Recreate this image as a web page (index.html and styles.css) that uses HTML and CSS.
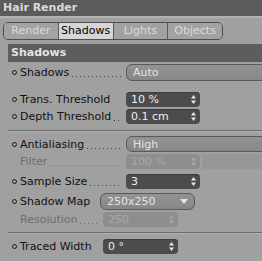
FILE: index.html
```html
<!DOCTYPE html>
<html>
<head>
<meta charset="utf-8">
<link rel="stylesheet" href="styles.css">
</head>
<body>
<div class="panel">
  <div class="title">Hair Render</div>
  <div class="tabs">
    <div class="tab">Render</div>
    <div class="tab sel">Shadows</div>
    <div class="tab">Lights</div>
    <div class="tab">Objects</div>
  </div>
  <div class="section">Shadows</div>

  <div class="row r-shadows">
    <div class="lab w-up"><span class="bul"></span><span class="txt">Shadows</span><span class="dots"></span></div>
    <div class="drop wide"><span>Auto</span></div>
  </div>

  <div class="row r-trans">
    <div class="lab w-up"><span class="bul"></span><span class="txt">Trans. Threshold</span></div>
    <div class="num"><span>10 %</span><svg class="spin" width="5" height="9" viewBox="0 0 5 9"><path d="M2.5 0 L5 3.5 L0 3.5 Z M0 5.5 L5 5.5 L2.5 9 Z" fill="#e6e6e6"/></svg></div>
  </div>

  <div class="row r-depth">
    <div class="lab w-up"><span class="bul"></span><span class="txt">Depth Threshold</span><span class="dots"></span></div>
    <div class="num"><span>0.1 cm</span><svg class="spin" width="5" height="9" viewBox="0 0 5 9"><path d="M2.5 0 L5 3.5 L0 3.5 Z M0 5.5 L5 5.5 L2.5 9 Z" fill="#e6e6e6"/></svg></div>
  </div>

  <div class="sep s1"></div>

  <div class="row r-aa">
    <div class="lab w-up"><span class="bul"></span><span class="txt">Antialiasing</span><span class="dots"></span></div>
    <div class="drop wide"><span>High</span></div>
  </div>

  <div class="row r-filter">
    <div class="lab w-up dis"><span class="nobul"></span><span class="txt">Filter</span><span class="dots"></span></div>
    <div class="num off"><span>100 %</span><svg class="spin" width="5" height="9" viewBox="0 0 5 9"><path d="M2.5 0 L5 3.5 L0 3.5 Z M0 5.5 L5 5.5 L2.5 9 Z" fill="#a8a8a8"/></svg></div>
    <div class="slider"></div>
  </div>

  <div class="row r-sample">
    <div class="lab w-up"><span class="bul"></span><span class="txt">Sample Size</span><span class="dots"></span></div>
    <div class="num"><span>3</span><svg class="spin" width="5" height="9" viewBox="0 0 5 9"><path d="M2.5 0 L5 3.5 L0 3.5 Z M0 5.5 L5 5.5 L2.5 9 Z" fill="#e6e6e6"/></svg></div>
  </div>

  <div class="row r-map">
    <div class="lab w-map"><span class="bul"></span><span class="txt">Shadow Map</span></div>
    <div class="drop map"><span>250x250</span><svg class="arr" width="8" height="5" viewBox="0 0 8 5"><path d="M0 0 L8 0 L4 5 Z" fill="#e4e4e4"/></svg></div>
  </div>

  <div class="row r-res">
    <div class="lab w-low dis"><span class="nobul"></span><span class="txt">Resolution</span><span class="dots"></span></div>
    <div class="num off low"><span>250</span><svg class="spin" width="5" height="9" viewBox="0 0 5 9"><path d="M2.5 0 L5 3.5 L0 3.5 Z M0 5.5 L5 5.5 L2.5 9 Z" fill="#a8a8a8"/></svg></div>
  </div>

  <div class="sep s2"></div>

  <div class="row r-traced">
    <div class="lab w-low"><span class="bul"></span><span class="txt">Traced Width</span></div>
    <div class="num low"><span>0 °</span><svg class="spin" width="5" height="9" viewBox="0 0 5 9"><path d="M2.5 0 L5 3.5 L0 3.5 Z M0 5.5 L5 5.5 L2.5 9 Z" fill="#e6e6e6"/></svg></div>
  </div>
</div>
</body>
</html>
```

FILE: styles.css
```css
html, body {
  margin: 0;
  padding: 0;
}
body {
  width: 262px;
  height: 261px;
  overflow: hidden;
  background: #a0a0a0;
  font-family: "DejaVu Sans", "Noto Sans", sans-serif;
  font-size: 11px;
  color: #111;
}
.panel {
  display: flex;
  flex-direction: column;
}
.title {
  height: 16px;
  line-height: 16px;
  background: #5b5b5b;
  color: #dadada;
  font-weight: bold;
  padding-left: 3px;
  border-bottom: 2px solid #b2b2b2;
}
.tabs {
  margin: 4px 0 0 3px;
  width: 218px;
  height: 16px;
  display: flex;
  border: 1px solid #4e4e4e;
  border-radius: 5px;
  overflow: hidden;
}
.tab {
  flex: 1;
  text-align: center;
  line-height: 16px;
  color: #dcdcdc;
  background: #a2a2a2;
  border-left: 1px solid #5a5a5a;
}
.tab:first-child {
  border-left: none;
}
.tab.sel {
  background: #d6d6d6;
  color: #000;
}
.section {
  margin: 4px 0 0 8px;
  height: 18px;
  line-height: 18px;
  background: #5d5d5d;
  color: #e2e2e2;
  font-weight: bold;
  padding-left: 3px;
}
.row {
  display: flex;
  align-items: center;
  padding-left: 12px;
}
.lab {
  display: flex;
  align-items: center;
  height: 100%;
  flex: none;
}
.w-up { width: 114px; }
.w-map { width: 88px; }
.w-low { width: 91px; }
.bul {
  width: 3px;
  height: 3px;
  border: 1px solid #1a1a1a;
  border-radius: 50%;
  margin-right: 3px;
  flex: none;
}
.nobul {
  width: 8px;
  flex: none;
}
.txt {
  white-space: nowrap;
}
.dis .txt { color: #6e6e6e; }
.dots {
  flex: 1;
  align-self: stretch;
  margin: 0 5px 0 3px;
  background-image: linear-gradient(to right, #3a3a3a 1px, transparent 1px);
  background-size: 4px 1px;
  background-repeat: repeat-x;
  background-position: 0 calc(50% + 4px);
}
.dis .dots {
  background-image: linear-gradient(to right, #707070 1px, transparent 1px);
}
.drop {
  height: 100%;
  box-sizing: border-box;
  border: 1px solid #5a5a5a;
  border-radius: 6px;
  background: linear-gradient(#939393, #878787);
  color: #e4e4e4;
  display: flex;
  align-items: center;
  padding-left: 6px;
}
.drop.wide {
  flex: 1;
  margin-right: -8px;
}
.drop.map {
  width: 95px;
  justify-content: space-between;
  padding-right: 6px;
}
.num {
  width: 74px;
  height: 100%;
  box-sizing: border-box;
  background: #4c4c4c;
  border-radius: 4px;
  color: #ececec;
  display: flex;
  align-items: center;
  justify-content: space-between;
  padding: 0 4px 0 5px;
  box-shadow: inset 0 1px 0 #3a3a3a;
}
.num.low { width: 75px; }
.num.off {
  background: #8e8e8e;
  color: #a9a9a9;
  box-shadow: none;
}
.slider {
  flex: 1;
  height: 100%;
  margin-left: 2px;
  background: #979797;
}
.sep {
  margin-left: 8px;
  height: 1px;
  background: #6c6c6c;
  border-bottom: 1px solid #b0b0b0;
}
.r-shadows { margin-top: 2px; height: 17px; }
.r-trans { margin-top: 11px; height: 15px; }
.r-depth { margin-top: 2px; height: 15px; }
.s1 { margin-top: 6px; }
.r-aa { margin-top: 4px; height: 16px; }
.r-filter { margin-top: 2px; height: 15px; }
.r-sample { margin-top: 5px; height: 15px; }
.r-map { margin-top: 4px; height: 17px; }
.r-res { margin-top: 2px; height: 15px; }
.s2 { margin-top: 5px; }
.r-traced { margin-top: 5px; height: 15px; }
```
